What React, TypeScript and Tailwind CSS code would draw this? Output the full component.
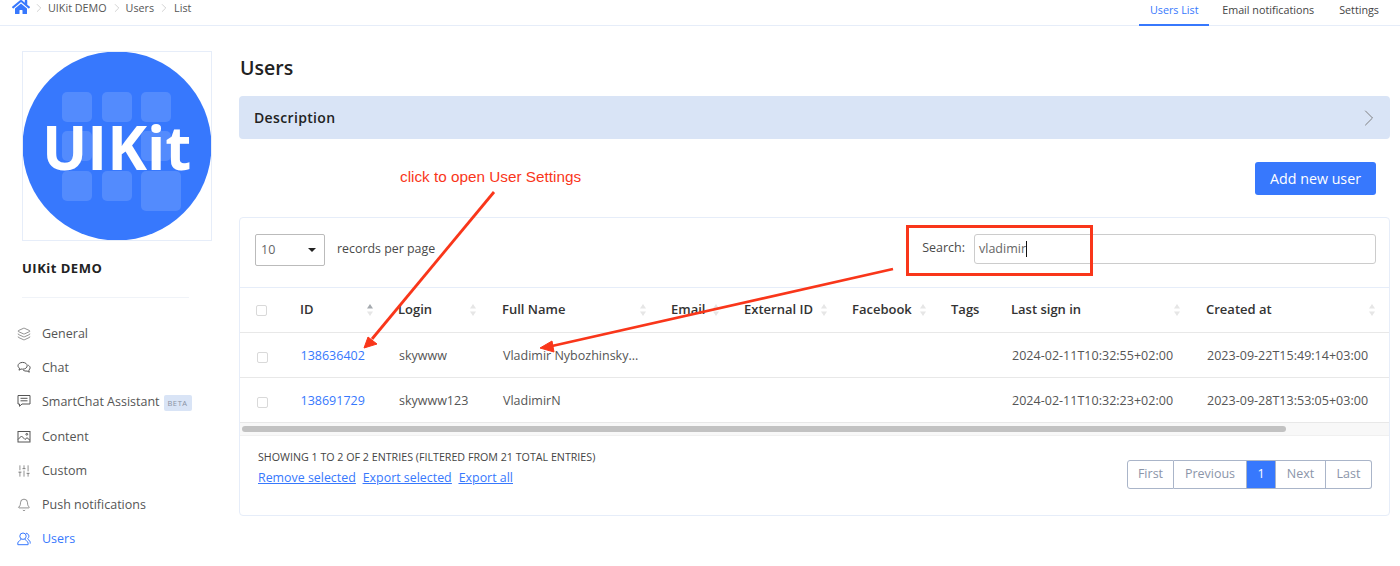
import React from "react";
import { FaHome } from "react-icons/fa";
import { ChevronRight, Layers, Bell, SlidersVertical } from "lucide-react";

const ChatIcon = () => (
  <svg width="14" height="14" viewBox="0 0 14 14" fill="none" stroke="currentColor" strokeWidth="1">
    <path d="M5.600 1.400c2.600 0 4.600 1.500 4.600 3.400S8.200 8.200 5.600 8.200c-.6 0-1.100-.1-1.600-.2L2 9.200l.5-2C1.500 6.600 1 5.800 1 4.800c0-1.900 2-3.400 4.600-3.400z" />
    <path d="M11.300 4.200c1.100.6 1.800 1.500 1.800 2.600 0 .9-.5 1.700-1.300 2.300l.5 2.100-2.200-1.200c-1.500.3-3-.1-4-1" />
  </svg>
);
const AssistantIcon = () => (
  <svg width="14" height="14" viewBox="0 0 14 14" fill="none" stroke="currentColor" strokeWidth="1">
    <path d="M1 1.500h12v8.500H5l-2.500 2.300V10H1z" strokeLinejoin="round" />
    <path d="M3.500 4.300h7M3.500 6.800h7" />
  </svg>
);
const PictureIcon = () => (
  <svg width="14" height="14" viewBox="0 0 14 14" fill="none" stroke="currentColor" strokeWidth="1">
    <rect x="1" y="1.500" width="12" height="10.500" />
    <path d="M1 9.500 4.500 6l3.500 3.500 2-1.800 3 2.600" />
    <circle cx="9.800" cy="4.300" r="0.900" />
  </svg>
);
const UsersIcon = () => (
  <svg width="14" height="14" viewBox="0 0 14 14" fill="none" stroke="currentColor" strokeWidth="1">
    <circle cx="6" cy="4.200" r="3.200" />
    <path d="M4.200 7c0 1.300-3.400 2-3.400 4v1.700h10.300V11c0-2-3.300-2.700-3.300-4" />
    <path d="M9 1.200c1.700.2 2.900 1.500 2.900 3 0 1-.5 1.900-1.300 2.500.1 1 2.600 1.700 2.600 3.600v1.300" />
  </svg>
);

const nav = [
  { label: "General", icon: <Layers size={14} strokeWidth={1.1} /> },
  { label: "Chat", icon: <ChatIcon /> },
  { label: "SmartChat Assistant", icon: <AssistantIcon />, beta: true },
  { label: "Content", icon: <PictureIcon /> },
  { label: "Custom", icon: <SlidersVertical size={14} strokeWidth={1.1} /> },
  { label: "Push notifications", icon: <Bell size={14} strokeWidth={1.1} /> },
  { label: "Users", icon: <UsersIcon />, active: true },
];

const Logo = () => (
  <svg width="190" height="190" viewBox="0 0 190 190" className="block">
    <circle cx="95" cy="95" r="94.500" fill="#3778fd" />
    <g fill="#ffffff" fillOpacity="0.14">
      <rect x="40" y="41" width="30" height="30" rx="5" />
      <rect x="80" y="41" width="30" height="30" rx="5" />
      <rect x="119" y="41" width="30" height="30" rx="5" />
      <rect x="40" y="80" width="30" height="30" rx="5" />
      <rect x="119" y="80" width="30" height="30" rx="5" />
      <rect x="40" y="120" width="30" height="30" rx="5" />
      <rect x="80" y="120" width="30" height="30" rx="5" />
      <rect x="119" y="120" width="40" height="40" rx="5" />
    </g>
    <text x="20" y="119" fill="#ffffff" fontSize="60" fontWeight="700" fontFamily="'Open Sans', sans-serif">UIKit</text>
  </svg>
);

const Sort = ({ active }: { active?: boolean }) => (
  <svg width="6" height="14" viewBox="0 0 6 14" className="shrink-0">
    <path d="M3 1 6 5.500H0z" fill={active ? "#a5aaaf" : "#e6e6e6"} />
    <path d="M3 13 6 8.500H0z" fill="#e6e6e6" />
  </svg>
);

const Check = ({ cls }: { cls: string }) => (
  <span className={`block w-[11px] h-[11px] rounded-[2px] border border-[#d9d9d9] bg-white ${cls}`} />
);

const gridCols = "grid grid-cols-[60px_98px_104px_169px_73px_108px_99px_60px_195px_184px]";

const headers: { t: string; w?: string; sort?: boolean; active?: boolean }[] = [
  { t: "ID", w: "w-[73px]", sort: true, active: true },
  { t: "Login", w: "w-[78px]", sort: true },
  { t: "Full Name", w: "w-[144px]", sort: true },
  { t: "Email", w: "w-[48px]", sort: true },
  { t: "External ID", w: "w-[83px]", sort: true },
  { t: "Facebook", w: "w-[74px]", sort: true },
  { t: "Tags" },
  { t: "Last sign in", w: "w-[169px]", sort: true },
  { t: "Created at", w: "w-[169px]", sort: true },
];

const rows = [
  ["138636402", "skywww", "Vladimir Nybozhinsky...", "2024-02-11T10:32:55+02:00", "2023-09-22T15:49:14+03:00"],
  ["138691729", "skywww123", "VladimirN", "2024-02-11T10:32:23+02:00", "2023-09-28T13:53:05+03:00"],
];

const pages = [
  { t: "First", w: "w-[47px]", cls: "rounded-l-[3px] border-l" },
  { t: "Previous", w: "w-[73px]", cls: "" },
  { t: "1", w: "w-[29px]", cls: "bg-[#3778fd] !text-white border-[#3778fd]" },
  { t: "Next", w: "w-[50px]", cls: "" },
  { t: "Last", w: "w-[46px]", cls: "rounded-r-[3px]" },
];

export default function App() {
  return (
    <div className="relative w-[1400px] h-[566px] overflow-hidden bg-white text-[#4a4a4a] font-['Open_Sans',sans-serif] text-[13px]">
      <header className="h-[26px] border-b border-[#e6edf9] flex items-stretch justify-between pr-[21px]">
        <div className="flex items-center pl-[12px] h-[16px] text-[10.750px] text-[#555]">
          <FaHome className="text-[#3778fd] w-[18px] h-[18px] -mt-[2px]" />
          <ChevronRight size={14} strokeWidth={0.9} className="ml-[2px] mr-[2px] text-[#aaa]" />
          <span>UIKit DEMO</span>
          <ChevronRight size={14} strokeWidth={0.9} className="ml-[3px] mr-[2px] text-[#aaa]" />
          <span>Users</span>
          <ChevronRight size={14} strokeWidth={0.9} className="mx-[3px] text-[#aaa]" />
          <span>List</span>
        </div>
        <nav className="flex text-[10.750px] h-[26px]">
          <span className="w-[70px] h-[26px] border-b-2 border-[#3778fd] text-[#3778fd] text-center leading-[20px]">Users List</span>
          <span className="ml-[13px] leading-[21px] text-[#444]">Email notifications</span>
          <span className="ml-[25px] leading-[21px] text-[#444]">Settings</span>
        </nav>
      </header>

      <div className="flex">
        <aside className="w-[239px] shrink-0 pl-[22px] pt-[25px]">
          <div className="w-[190px] h-[190px] outline outline-1 -outline-offset-1 outline-[#e6edf9]">
            <Logo />
          </div>
          <div className="mt-[18px] font-bold text-[13px] leading-[18px] tracking-[0.5px] text-[#222]">UIKit DEMO</div>
          <div className="w-[167px] border-t border-[#f0f3f8] mt-[20px]" />
          <ul className="mt-[19px] -ml-[5px] text-[12.500px]">
            {nav.map((n) => (
              <li key={n.label} className={`flex items-center ${n.beta ? "h-[35px]" : "h-[34px]"} ${n.active ? "text-[#3778fd]" : "text-[#555]"}`}>
                <span className={`w-[25px] flex-none ${n.beta ? "-mt-[3px]" : "-mt-[1px]"}`}>{n.icon}</span>
                <span className={`whitespace-nowrap ${n.beta ? "-mt-[1px]" : ""}`}>{n.label}</span>
                {n.beta && (
                  <span className="ml-[4px] w-[28px] text-center h-[16px] leading-[16px] rounded-[2px] bg-[#d9e4f6] text-[7.500px] tracking-[0.6px] text-[#8a93a3]">BETA</span>
                )}
              </li>
            ))}
          </ul>
        </aside>

        <main className="w-[1151px] pt-[27px]">
          <h1 className="text-[19.500px] leading-[30px] font-semibold text-[#222] pl-[1px]">Users</h1>
          <div className="mt-[13px] h-[43px] rounded-[4px] bg-[#d9e4f6] flex items-center justify-between pl-[15px] pr-[7px]">
            <span className="font-semibold text-[14px] tracking-[0.35px] text-[#222]">Description</span>
            <ChevronRight size={28} strokeWidth={0.8} className="text-[#777]" />
          </div>
          <div className="mt-[23px] flex justify-end pr-[14px]">
            <button className="w-[121px] h-[33px] rounded-[3px] bg-[#3778fd] text-white text-[14.250px]">Add new user</button>
          </div>
          <section className="mt-[22px] h-[299px] border border-[#e6edf9] rounded-[4px]">
            <div className="h-[70px] flex items-start pl-[15px] pr-[13px] pt-[16px] border-b border-[#e6edf9]">
              <div className="w-[70px] h-[32px] rounded-[2px] border border-[#bbb] flex items-center justify-between pl-[5px] pr-[8px] text-[#666]">
                <span className="text-[12.500px]">10</span>
                <span className="w-0 h-0 border-x-[4px] border-x-transparent border-t-[4px] border-t-[#222]" />
              </div>
              <span className="ml-[12px] mt-[5px] text-[12.400px] leading-[20px]">records per page</span>
              <span className="ml-auto mr-[9px] mt-[4px] text-[12.500px] leading-[20px]">Search:</span>
              <div className="w-[402px] h-[30px] rounded-[3px] border border-[#ccc] pl-[4px] leading-[28px] flex items-center text-[12.500px]">
                <span className="text-[#666]">vladimir</span>
                <span className="inline-block w-[1px] h-[16px] bg-[#111]" />
              </div>
            </div>
            <div className={`${gridCols} h-[45px] items-center border-b border-[#e8e8e8] font-semibold text-[#333]`}>
              <div className="pl-[16px]"><Check cls="" /></div>
              {headers.map((h) => (
                <div key={h.t} className={`flex items-center justify-between ${h.w ?? ""}`}>
                  <span className="whitespace-nowrap">{h.t}</span>
                  {h.sort && <Sort active={h.active} />}
                </div>
              ))}
            </div>
            {rows.map((r) => (
              <div key={r[0]} className={`${gridCols} h-[45px] pt-[2px] items-center border-b border-[#e8e8e8] text-[#555] text-[12.500px]`}>
                <div className="pl-[17px] pt-[3px]"><Check cls="" /></div>
                <a className="text-[#3778fd] pl-[0.5px]">{r[0]}</a>
                <span className="pl-[1px]">{r[1]}</span>
                <span className="pl-[1px] whitespace-nowrap">{r[2]}</span>
                <span /><span /><span /><span />
                <span className="pl-[1px] whitespace-nowrap tracking-[0.02px]">{r[3]}</span>
                <span className="pl-[1px] whitespace-nowrap tracking-[0.02px]">{r[4]}</span>
              </div>
            ))}
            <div className="h-[13px] bg-[#f8f8f8] border-b border-[#f0f0f0] pl-[2px] pt-[3px]">
              <div className="w-[1044px] h-[6px] rounded-full bg-[#c2c2c2]" />
            </div>
            <div className="flex items-start justify-between pl-[18px] pr-[17px]">
              <div className="pt-[14px]">
                <div className="text-[10.700px] leading-[14px] text-[#444] whitespace-nowrap">SHOWING 1 TO 2 OF 2 ENTRIES (FILTERED FROM 21 TOTAL ENTRIES)</div>
                <div className="mt-[5px] flex gap-[7px] text-[12.400px] leading-[17px] text-[#3778fd] underline">
                  <a>Remove selected</a>
                  <a>Export selected</a>
                  <a>Export all</a>
                </div>
              </div>
              <div className="flex mt-[24px] h-[29px] text-[12.500px] text-[#8b95a9]">
                {pages.map((p) => (
                  <span key={p.t} className={`${p.w} flex items-center justify-center border-y border-r border-[#aab5c9] ${p.cls}`}>{p.t}</span>
                ))}
              </div>
            </div>
          </section>
        </main>
      </div>

      {/* red annotations over the page */}
      <span className="absolute left-[400px] top-[168px] text-[15.300px] leading-[18px] text-[#f9361a] font-['Liberation_Sans',sans-serif] whitespace-nowrap">click to open User Settings</span>
      <div className="absolute left-[906px] top-[225px] w-[187px] h-[51px] border-[3px] border-[#f9361a]" />
      <svg className="absolute left-0 top-0 pointer-events-none" width="1400" height="566" viewBox="0 0 1400 566">
        <line x1="494" y1="192" x2="372" y2="339" stroke="#f9361a" strokeWidth="2.800" />
        <path d="M364 348 L368 337 L377 344 Z" fill="#f9361a" stroke="#f9361a" strokeLinejoin="round" />
        <line x1="893" y1="269" x2="552" y2="346" stroke="#f9361a" strokeWidth="2.800" />
        <path d="M540 348 L552 341 L554 352 Z" fill="#f9361a" stroke="#f9361a" strokeLinejoin="round" />
      </svg>
    </div>
  );
}
